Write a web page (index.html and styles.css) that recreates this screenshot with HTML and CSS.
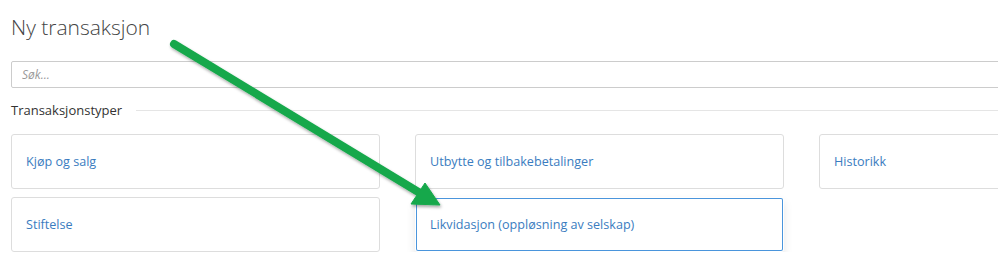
FILE: index.html
```html
<!DOCTYPE html>
<html lang="no">
<head>
    <meta charset="UTF-8">
    <meta name="viewport" content="width=device-width, initial-scale=1.0">
    <title>Ny transaksjon</title>
    <link rel="stylesheet" href="styles.css">
</head>
<body>
    <div class="page">
        <h1>Ny transaksjon</h1>
        <input type="text" class="search" placeholder="Søk...">

        <fieldset class="types">
            <legend>Transaksjonstyper</legend>
            <div class="grid">
                <a class="card" href="#">Kjøp og salg</a>
                <a class="card" href="#">Utbytte og tilbakebetalinger</a>
                <a class="card" href="#">Historikk</a>
                <a class="card" href="#">Stiftelse</a>
                <a class="card selected" href="#">Likvidasjon (oppløsning av selskap)</a>
            </div>
        </fieldset>

        <!-- pil lagt over skjermbildet -->
        <svg class="arrow" width="998" height="278" viewBox="0 0 998 278">
            <defs>
                <filter id="shadow" x="-10%" y="-10%" width="120%" height="130%">
                    <feDropShadow dx="1" dy="2" stdDeviation="1.5" flood-color="#000" flood-opacity="0.35"/>
                </filter>
            </defs>
            <g filter="url(#shadow)" fill="#14a84b" stroke="#14a84b">
                <line x1="174" y1="44" x2="420" y2="193" stroke-width="8" stroke-linecap="round"/>
                <polygon points="425,183 411,204 440,205" stroke-width="1" stroke-linejoin="round"/>
            </g>
        </svg>
    </div>
</body>
</html>
```

FILE: styles.css
```css
body {
    margin: 0;
    padding: 0;
    background-color: #fff;
    font-family: 'Open Sans', sans-serif;
    overflow: hidden;
}
.page {
    position: relative;
    padding: 0 0 0 11px;
    width: 1300px;
}
h1 {
    font-size: 21px;
    font-weight: 300;
    color: #444;
    margin: 0;
    padding-top: 12px;
    line-height: 30px;
}
.search {
    display: block;
    margin-top: 19px;
    width: 1200px;
    height: 27px;
    box-sizing: border-box;
    border: 1px solid #ccc;
    border-radius: 2px;
    padding: 0 10px;
    font-family: 'Open Sans', sans-serif;
    font-size: 12px;
    font-style: italic;
    color: #555;
}
.search::placeholder {
    color: #999;
}
.types {
    border: none;
    border-top: 1px solid #e5e5e5;
    margin: 13px 0 0 0;
    padding: 0;
    width: 1200px;
}
.types legend {
    font-size: 13px;
    color: #333;
    padding: 0 14px 0 0;
    margin-left: 0;
}
.grid {
    display: grid;
    grid-template-columns: repeat(3, 369px);
    column-gap: 35px;
    row-gap: 8px;
    margin-top: 15px;
}
.card {
    display: flex;
    align-items: center;
    height: 55px;
    box-sizing: border-box;
    padding: 0 14px;
    border: 1px solid #ddd;
    border-radius: 3px;
    background: #fff;
    color: #3a7cc0;
    font-size: 12.6px;
    text-decoration: none;
}
.card.selected {
    border-color: transparent;
    box-shadow: inset 0 0 0 1px #4a95dc, 0 5px 10px rgba(0, 0, 0, 0.1);
}
.arrow {
    position: absolute;
    left: 0;
    top: 0;
    pointer-events: none;
}
```
